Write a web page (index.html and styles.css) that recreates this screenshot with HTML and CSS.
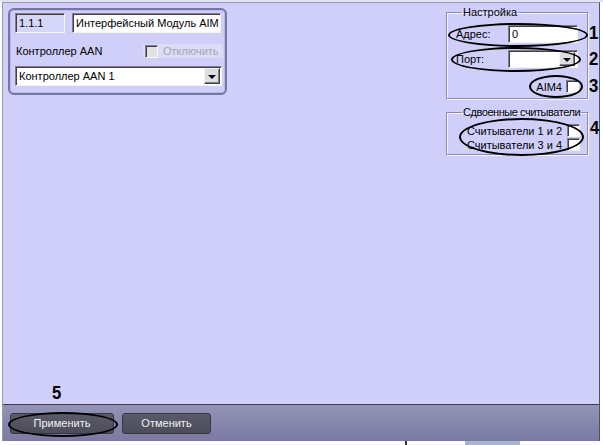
FILE: index.html
```html
<!DOCTYPE html>
<html lang="ru">
<head>
<meta charset="utf-8">
<title>AIM</title>
<link rel="stylesheet" href="styles.css">
</head>
<body>
<div class="topline"></div>
<div class="window">
  <div class="content">
    <div class="device-box">
      <div class="dev-row">
        <div class="field field-id">1.1.1</div>
        <div class="field field-name">Интерфейсный Модуль AIM</div>
      </div>
      <div class="ctrl-row">
        <span class="ctrl-label">Контроллер AAN</span>
        <span class="disabled-chk"><span class="chk chk-disabled"></span><span class="dis-text">Отключить</span></span>
      </div>
      <div class="combo combo-ctrl">
        <span class="combo-text">Контроллер AAN 1</span>
        <span class="drop"><span class="tri"></span></span>
      </div>
    </div>

    <div class="right-col">
      <fieldset class="group g-settings">
        <legend>Настройка</legend>
        <div class="frow">
          <span>Адрес:</span>
          <div class="field field-addr">0</div>
          <span class="ring ring1"></span>
          <span class="num num1">1</span>
        </div>
        <div class="frow frow-port">
          <span>Порт:</span>
          <div class="combo combo-port"><span class="combo-text"></span><span class="drop"><span class="tri"></span></span></div>
          <span class="ring ring2"></span>
          <span class="num num2">2</span>
        </div>
        <div class="frow frow-aim">
          <span class="aim-wrap"><span>AIM4</span><span class="chk"></span><span class="ring ring3"></span></span>
          <span class="num num3">3</span>
        </div>
      </fieldset>

      <fieldset class="group g-readers">
        <legend>Сдвоенные считыватели</legend>
        <div class="rrows">
          <div class="rrow"><span>Считыватели 1 и 2</span><span class="chk"></span></div>
          <div class="rrow"><span>Считыватели 3 и 4</span><span class="chk"></span></div>
          <span class="ring ring4"></span>
          <span class="num num4">4</span>
        </div>
      </fieldset>
    </div>
  </div>

  <div class="toolbar">
    <span class="num num5">5</span>
    <div class="btn btn-apply">Применить<span class="ring ring5"></span></div>
    <div class="btn btn-cancel">Отменить</div>
  </div>
</div>
<div class="taskbar">
  <span class="tb-a"></span><span class="tb-b"></span><span class="tb-c"></span><span class="tb-d"></span>
</div>
</body>
</html>
```

FILE: styles.css
```css
* { box-sizing: border-box; }

html, body {
  margin: 0;
  padding: 0;
}

body {
  width: 603px;
  height: 445px;
  overflow: hidden;
  background: #ffffff;
  font-family: "Liberation Sans", Arial, sans-serif;
  font-size: 11px;
  color: #000;
}

.topline {
  height: 2px;
  background: #e2e2f2;
}

.window {
  margin-left: 2px;
  width: 598px;
  height: 439px;
  border-top: 1px solid #9a9ab8;
  border-left: 1px solid #9a9ab8;
  border-right: 1px solid #50506a;
  display: flex;
  flex-direction: column;
}

.content {
  flex: 1;
  background: #cfcffa;
  display: flex;
  justify-content: space-between;
  align-items: flex-start;
  padding: 0 11px 0 5px;
}

/* left device box */
.device-box {
  margin-top: 5px;
  width: 219px;
  height: 87px;
  border: 2px solid #7676a6;
  border-radius: 6px;
  box-shadow: inset 0 0 0 1px #babae6;
  padding: 3px 4px 0 5px;
}

.dev-row {
  display: flex;
  gap: 7px;
}

.field {
  height: 20px;
  border: 1px solid;
  border-color: #808080 #f4f4f4 #f4f4f4 #808080;
  box-shadow: inset 1px 1px 0 #404040;
  background: #ffffff;
  padding: 3px 0 0 3px;
  line-height: 13px;
  white-space: nowrap;
  overflow: hidden;
}

.field-id {
  width: 50px;
  background: #d6d6f8;
}

.field-name {
  width: 149px;
}

.ctrl-row {
  margin-top: 11px;
  height: 14px;
  display: flex;
  justify-content: space-between;
  align-items: center;
}

.ctrl-label {
  padding-left: 1px;
}

.disabled-chk {
  display: flex;
  align-items: center;
  gap: 5px;
  width: 80px;
  height: 14px;
  padding-left: 2px;
  background: #dcdcf6;
  margin-right: -2px;
}

.dis-text {
  color: #a4a4b4;
}

.chk {
  display: inline-block;
  width: 13px;
  height: 13px;
  flex: none;
  border: 1px solid;
  border-color: #808080 #f4f4f4 #f4f4f4 #808080;
  box-shadow: inset 1px 1px 0 #404040;
  background: #ffffff;
}

.chk-disabled {
  background: #e2e1e4;
}

.combo {
  height: 20px;
  border: 1px solid;
  border-color: #808080 #f4f4f4 #f4f4f4 #808080;
  box-shadow: inset 1px 1px 0 #404040;
  background: #ffffff;
  display: flex;
  align-items: center;
  justify-content: space-between;
  padding: 1px 1px 1px 3px;
}

.combo-ctrl {
  margin-top: 8px;
  width: 207px;
}

.drop {
  width: 16px;
  height: 16px;
  flex: none;
  background: #dedde2;
  border: 1px solid;
  border-color: #f4f4f4 #404040 #404040 #f4f4f4;
  box-shadow: inset -1px -1px 0 #808080;
  display: flex;
  align-items: center;
  justify-content: center;
}

.tri {
  width: 0;
  height: 0;
  border-left: 4px solid transparent;
  border-right: 4px solid transparent;
  border-top: 4px solid #000;
  margin-top: 1px;
}

/* right column */
.right-col {
  margin-top: 3px;
  width: 142px;
}

.group {
  margin: 0;
  min-width: 0;
  border: 1px solid #8c8ca2;
  box-shadow: inset 1px 1px 0 #f4f4ff, 1px 1px 0 #f4f4ff;
}

.group legend {
  padding: 0 1px;
  margin-left: 6px;
  line-height: 13px;
  font-size: 11px;
  white-space: nowrap;
}

.g-settings {
  padding: 6px 9px 5px 9px;
}

.frow {
  position: relative;
  height: 18px;
  display: flex;
  justify-content: space-between;
  align-items: center;
}

.frow-port {
  margin-top: 7px;
}

.frow-aim {
  margin-top: 12px;
  height: 13px;
  justify-content: flex-end;
}

.field-addr {
  width: 70px;
  height: 18px;
  padding-top: 2px;
}

.combo-port {
  width: 70px;
  height: 18px;
  padding: 1px 2px 1px 3px;
}

.combo-port .drop {
  height: 14px;
}

.aim-wrap {
  position: relative;
  display: flex;
  align-items: center;
  gap: 4px;
  margin-right: -1px;
}

.g-readers {
  margin-top: 7px;
  padding: 5px 7px 3px 9px;
}

.g-readers legend {
  margin-left: 6px;
  letter-spacing: -0.45px;
}

.rrows {
  position: relative;
  display: flex;
  flex-direction: column;
  gap: 1px;
}

.rrow {
  height: 13px;
  display: flex;
  justify-content: flex-end;
  align-items: center;
  gap: 5px;
}

/* annotations */
.ring {
  position: absolute;
  border: 2.5px solid #000;
  border-radius: 50%;
  pointer-events: none;
}

.ring1 { left: -8px; right: -10px; top: -2px; bottom: -4px; }
.ring2 { left: -5px; right: -3px; top: -3px; bottom: -4px; }
.ring3 { left: -7px; right: -4px; top: -5px; bottom: -5px; }
.ring4 { left: 3px; right: -4px; top: -6px; bottom: -5px; }
.ring5 { left: -3px; right: -5px; top: -2px; bottom: -4px; }

.num {
  position: absolute;
  font-weight: bold;
  font-size: 19px;
  line-height: 18px;
  color: #000;
  transform: scaleX(0.88);
  transform-origin: left top;
}

.num1 { left: calc(100% + 11px); top: -1px; }
.num2 { left: calc(100% + 11px); top: 0; }
.num3 { left: calc(100% + 11px); top: -3px; }
.num4 { left: calc(100% + 10px); top: -5px; }
.num5 { left: 49px; top: -21px; }

/* toolbar */
.toolbar {
  position: relative;
  height: 37px;
  flex: none;
  border-top: 1px solid #3c3c50;
  background: linear-gradient(#9494b8, #7a7aa2);
  display: flex;
  align-items: center;
  gap: 8px;
  padding-left: 7px;
}

.btn {
  position: relative;
  height: 21px;
  background: linear-gradient(#5a5a68, #4c4c5a);
  border: 1px solid #36364a;
  border-radius: 3px;
  color: #f2f2f2;
  display: flex;
  align-items: center;
  justify-content: center;
}

.btn-apply { width: 104px; }
.btn-cancel { width: 89px; }

/* strip below */
.taskbar {
  height: 4px;
  display: flex;
  background: #ffffff;
}

.tb-a { width: 405px; }
.tb-b { width: 2px; background: #303040; }
.tb-c { width: 58px; }
.tb-d { width: 55px; background: #a8b4c8; }
```
